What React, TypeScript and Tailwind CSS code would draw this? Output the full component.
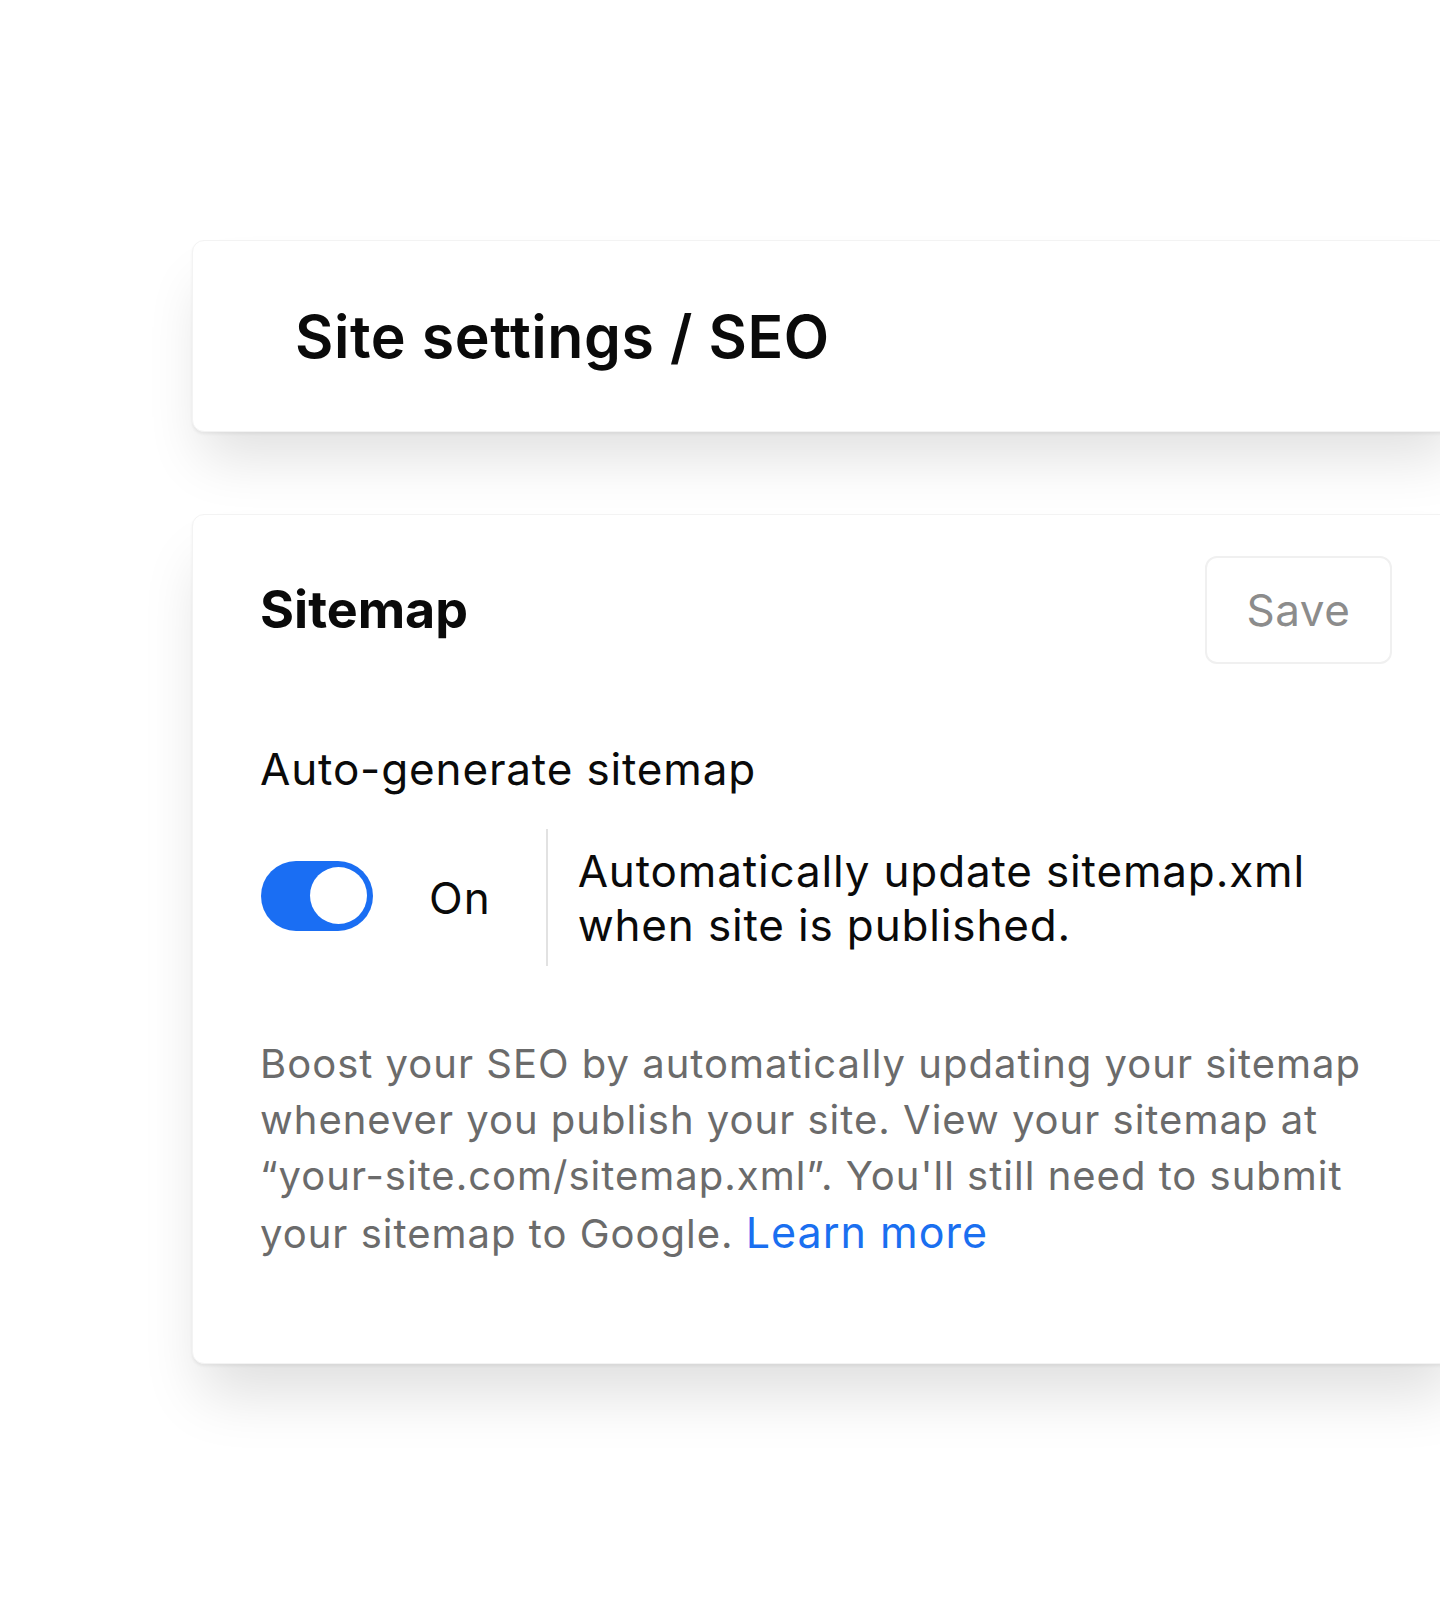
import React from "react";

export default function App() {
  const font = { fontFamily: "Inter, 'Noto Sans', sans-serif" };
  return (
    <div
      className="w-full h-[1620px] overflow-hidden bg-white pt-[240px] pl-[192px]"
      style={font}
    >
      <div className="w-[1271px] h-[192px] bg-white rounded-[12px] border border-[#f3f3f3] shadow-[0_2px_3px_rgba(0,0,0,0.06),0_36px_56px_-10px_rgba(0,0,0,0.12)] flex items-center pl-[102px]">
        <h1 className="text-[59px] leading-none font-semibold text-[#0a0a0a] tracking-[0.6px]">
          Site settings / SEO
        </h1>
      </div>

      <div className="mt-[82px] w-[1271px] h-[850px] bg-white rounded-[12px] border border-[#f3f3f3] shadow-[0_2px_3px_rgba(0,0,0,0.06),0_40px_60px_-10px_rgba(0,0,0,0.13)] pl-[67px] pr-[70px] pt-[41px]">
        <div className="flex items-center justify-between">
          <h2 className="text-[52px] leading-none font-bold text-[#0a0a0a] tracking-[0px]">
            Sitemap
          </h2>
          <button className="w-[187px] h-[108px] rounded-[12px] border-2 border-[#f0f0f0] text-[44px] text-[#8c8c8c] flex items-center justify-center tracking-[0.5px]">
            Save
          </button>
        </div>

        <div className="mt-[80px] text-[44px] leading-[50px] text-[#0a0a0a] tracking-[0.85px]">
          Auto-generate sitemap
        </div>

        <div className="mt-[35px] flex items-center h-[137px]">
          <div className="w-[112px] h-[70px] rounded-full bg-[#1a6ef3] flex items-center justify-end pr-[6px] ml-[1px] -mt-[4px]">
            <div className="w-[57px] h-[57px] rounded-full bg-white" />
          </div>
          <div className="ml-[56px] text-[44px] text-[#0a0a0a] leading-none tracking-[1px]">On</div>
          <div className="ml-[55px] w-[2px] h-[137px] bg-[#e2e2e2]" />
          <div className="ml-[30px] text-[44px] leading-[54px] text-[#0a0a0a] tracking-[0.85px]">
            Automatically update sitemap.xml
            <br />
            when site is published.
          </div>
        </div>

        <p className="mt-[70px] w-[1150px] text-[40px] leading-[56px] text-[#6b6b6b] tracking-[1px]">
          Boost your SEO by automatically updating your sitemap
          <br />
          whenever you publish your site. View your sitemap at
          <br />
          “your-site.com/sitemap.xml”. You'll still need to submit
          <br />
          your sitemap to Google.{" "}
          <a className="text-[#1a6ff0] text-[43px] tracking-[1px]">Learn more</a>
        </p>
      </div>
    </div>
  );
}
